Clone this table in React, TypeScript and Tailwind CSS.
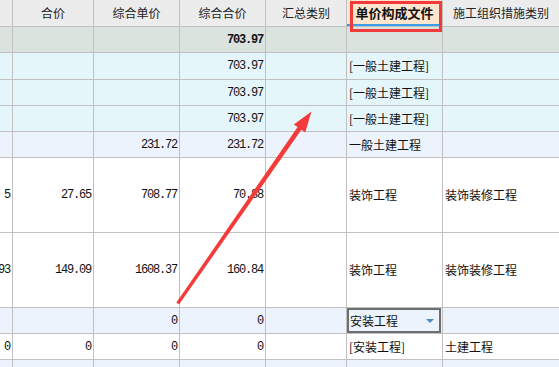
import React from 'react';

const CJK = { fontFamily: '"Noto Sans CJK SC", "Noto Sans", sans-serif' };
const MONO = { fontFamily: '"Liberation Mono", "DejaVu Sans Mono", monospace' };

const COLS = 'grid grid-cols-[13px_81px_86px_86px_81px_96px_116px]';

type Row = {
  h: string;
  bg: string;
  cells: string[];
  bold?: boolean;
  dropdown?: boolean;
};

const ROWS: Row[] = [
  { h: 'h-[26px]', bg: 'bg-[#dbe3df]', cells: ['', '', '', '703.97', '', '', ''], bold: true },
  { h: 'h-[27px]', bg: 'bg-[#e5f6fb]', cells: ['', '', '', '703.97', '', '[一般土建工程]', ''] },
  { h: 'h-[26px]', bg: 'bg-[#e5f6fb]', cells: ['', '', '', '703.97', '', '[一般土建工程]', ''] },
  { h: 'h-[26px]', bg: 'bg-[#e5f6fb]', cells: ['', '', '', '703.97', '', '[一般土建工程]', ''] },
  { h: 'h-[26px]', bg: 'bg-[#edf3fd]', cells: ['', '', '231.72', '231.72', '', '一般土建工程', ''] },
  { h: 'h-[75px]', bg: 'bg-white', cells: ['5', '27.65', '708.77', '70.88', '', '装饰工程', '装饰装修工程'] },
  { h: 'h-[75px]', bg: 'bg-white', cells: ['93', '149.09', '1608.37', '160.84', '', '装饰工程', '装饰装修工程'] },
  { h: 'h-[26px]', bg: 'bg-[#edf3fd]', cells: ['', '', '0', '0', '', '安装工程', ''], dropdown: true },
  { h: 'h-[26px]', bg: 'bg-white', cells: ['0', '0', '0', '0', '', '[安装工程]', '土建工程'] },
  { h: 'h-[20px]', bg: 'bg-[#edf3fd]', cells: ['', '', '', '', '', '', ''] },
];

const HEADERS = ['', '合价', '综合单价', '综合合价', '汇总类别', '单价构成文件', '施工组织措施类别'];

function Cell({ text, col, bold, dropdown }: { text: string; col: number; bold?: boolean; dropdown?: boolean }) {
  const border = col < 6 ? 'border-r border-[#c0c0c0]' : '';
  if (col >= 5) {
    if (dropdown) {
      return (
        <div className={`${border} relative flex items-center`}>
          <div className="absolute left-[0px] right-[1px] top-[0px] bottom-[0px] border-2 border-[#6e6e6e] flex items-center pl-[1px] pr-[5px] justify-between">
            <span className="text-[12px] text-[#111]" style={CJK}>{text}</span>
            <span className="w-0 h-0 border-l-[4px] border-r-[4px] border-t-[4px] border-l-transparent border-r-transparent border-t-[#4a8ec5]" />
          </div>
        </div>
      );
    }
    return (
      <div className={`${border} flex items-center pl-[2px] overflow-hidden whitespace-nowrap`}>
        <span className="text-[12px] text-[#111]" style={CJK}>{text}</span>
      </div>
    );
  }
  return (
    <div className={`${border} flex items-center justify-end pr-[2px] overflow-hidden whitespace-nowrap`}>
      <span
        className={`text-[12px] tracking-[-1.2px] text-[#111] ${bold ? 'font-bold' : ''}`}
        style={MONO}
      >
        {text}
      </span>
    </div>
  );
}

export default function App() {
  return (
    <div className="relative w-[559px] h-[367px] overflow-hidden bg-white">
      <div className={`${COLS} h-[27px] bg-[#ececec] border-b border-[#c0c0c0]`}>
        {HEADERS.map((h, i) => (
          <div
            key={i}
            className={`${i < 6 ? 'border-r border-[#c0c0c0]' : ''} flex items-center justify-center whitespace-nowrap overflow-hidden ${
              i === 5 ? 'bg-[#fde6cd] relative' : ''
            }`}
          >
            <span
              className={i === 5 ? 'text-[13px] font-bold text-[#111]' : 'text-[12px] text-[#222]'}
              style={CJK}
            >
              {h}
            </span>
            {i === 5 && <div className="absolute left-0 right-0 bottom-0 h-[2px] bg-[#3d9be9]" />}
          </div>
        ))}
      </div>

      {ROWS.map((r, ri) => (
        <div key={ri} className={`${COLS} ${r.h} ${r.bg} border-b border-[#c0c0c0]`}>
          {r.cells.map((c, ci) => (
            <Cell key={ci} text={c} col={ci} bold={r.bold} dropdown={r.dropdown && ci === 5} />
          ))}
        </div>
      ))}

      {/* red highlight box on header */}
      <div className="absolute left-[350px] top-[1px] w-[92px] h-[31px] border-[3px] border-[#f23a3a]" />

      {/* annotation arrow */}
      <svg className="absolute left-0 top-0 pointer-events-none" width="559" height="367">
        <polygon
          points="177.6,303.4 176.4,302.6 297.6,127.1 293.8,124.4 311.5,111.5 305.2,132.4 301.4,129.8 179.2,304.2"
          fill="#f53a3a"
        />
      </svg>
    </div>
  );
}
